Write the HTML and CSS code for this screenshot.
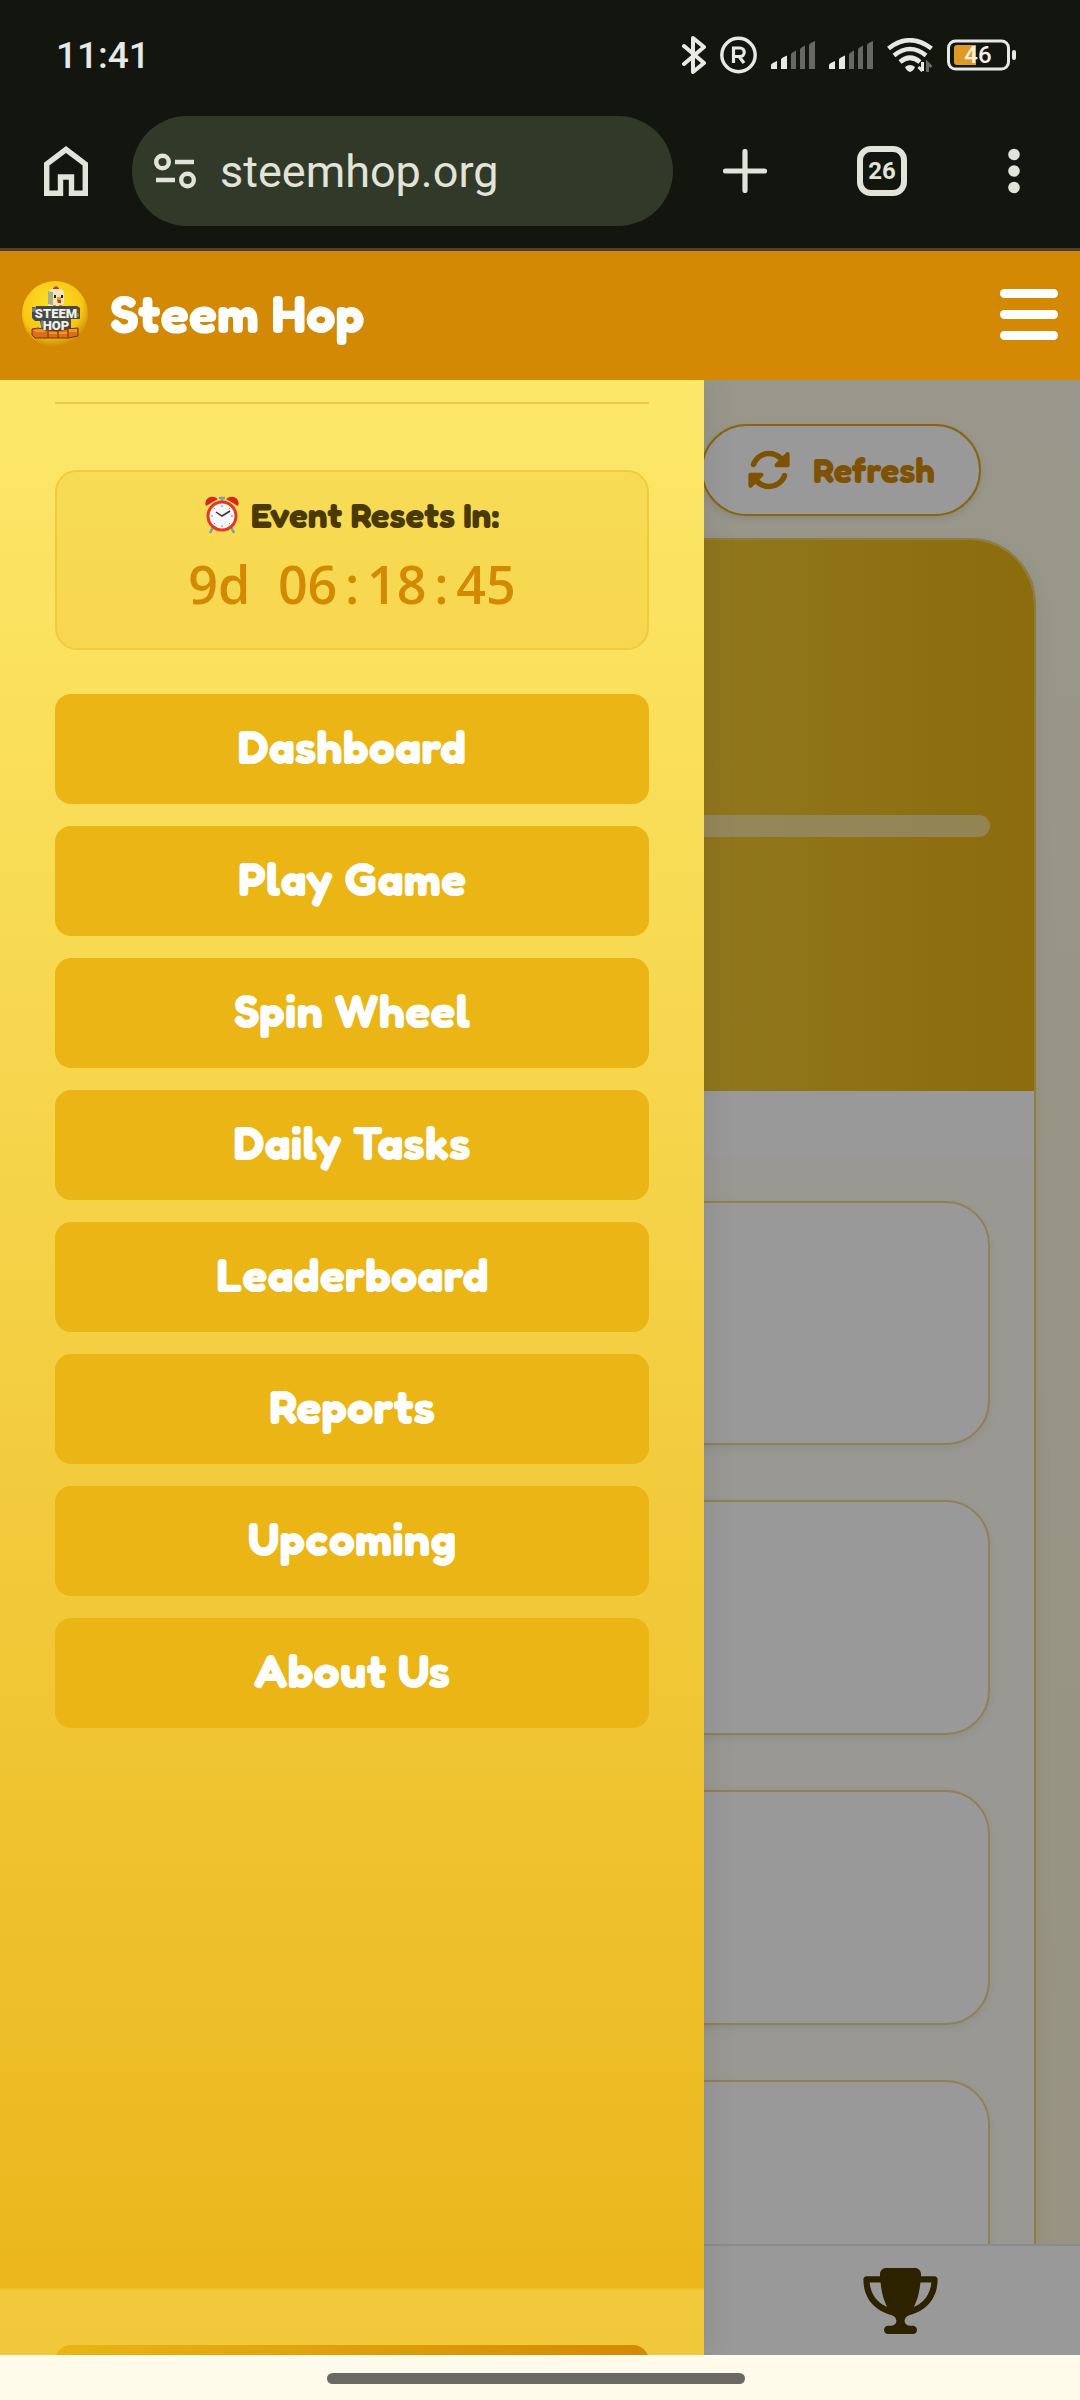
FILE: index.html
```html
<!DOCTYPE html>
<html lang="en">
<head>
<meta charset="UTF-8">
<meta name="viewport" content="width=device-width,initial-scale=1.0">
<title>Steem Hop</title>
<link rel="stylesheet" href="styles.css">
</head>

<body>
	<div class="browser">
		<div class="status">
			<span class="clock">11:41</span>
			<div class="status-icons">
				<svg width="24" height="38" viewBox="0 0 24 38" fill="none" stroke="#e8e8e6" stroke-width="4" stroke-linecap="round" stroke-linejoin="round"><path d="M2 10l20 17-11 9V2l11 9L2 28"/></svg>
				<svg width="37" height="38" viewBox="0 0 37 38" fill="none" stroke="#e8e8e6"><circle cx="18.500" cy="19" r="16.700" stroke-width="3.400"/><path d="M13.500 27V12h6.500a4 4 0 0 1 0 8.500h-6.500M19 20.500l5 6.500" stroke-width="3.200"/></svg>
				<svg width="44" height="30" viewBox="0 0 44 30" fill="#e8e8e6"><path d="M0 29v-4q0-1.500 6-4v8zM10 29V19.500q0-1.500 6-4V29z"/><path fill="#676864" d="M20 29V14.500q0-1.500 5-4V29zM29 29V9.500q0-1.500 5-4V29zM38 29V5q0-1.500 6-4v28z"/></svg>
				<svg width="44" height="30" viewBox="0 0 44 30" fill="#e8e8e6"><path d="M0 29v-4q0-1.500 6-4v8zM10 29V19.500q0-1.500 6-4V29z"/><path fill="#676864" d="M20 29V14.500q0-1.500 5-4V29zM29 29V9.500q0-1.500 5-4V29zM38 29V5q0-1.500 6-4v28z"/></svg>
				<svg width="46" height="34" viewBox="0 0 46 34" fill="none" stroke="#e8e8e6" stroke-width="4.600"><path d="M1.500 10.500q21-16.500 43 0M7 17.500q16-13 32 0M13 24q10-8.500 20 0"/><path fill="#e8e8e6" stroke="none" d="M18 29q5-4 10 0-1.500 4-5 5-3.500-1-5-5z"/><path d="M35.500 24v9M35.500 33l-4-4" stroke-width="3"/><path d="M40.500 34v-9l4 4" stroke="#676864" stroke-width="3"/></svg>
				<svg width="69" height="32" viewBox="0 0 69 32"><rect x="1.500" y="2" width="60" height="28" rx="7" fill="none" stroke="#e8e8e6" stroke-width="3"/><path d="M10 6h19v20H10a3 3 0 0 1-3-3V9a3 3 0 0 1 3-3z" fill="#df9a25"/><rect x="65" y="11" width="4" height="10" rx="2" fill="#e8e8e6"/><text x="31" y="24" class="battery">46</text></svg>
			</div>
		</div>
		<div class="toolbar">
			<button class="tool" aria-label="Home">
				<svg width="44" height="50" viewBox="0 0 44 50"><path d="M2.700 47.300V18L22 3.500 41.300 18v29.300H27.500V31h-11v16.300z" fill="none" stroke="#e2e4d9" stroke-width="5.400"/></svg>
			</button>
			<div class="address">
				<svg width="42" height="36" viewBox="0 0 42 36" fill="none" stroke="#e2e4d9" stroke-width="4.400"><circle cx="8.500" cy="9" r="6.300"/><path d="M21 9h19M2 27h19"/><circle cx="33.500" cy="27" r="6.300"/></svg>
				<input type="text" value="steemhop.org" aria-label="Address">
			</div>
			<button class="tool" aria-label="New tab">
				<svg width="44" height="44" viewBox="0 0 44 44"><path d="M22 2.500v39M2.500 22h39" stroke="#e2e4d9" stroke-width="5.200" stroke-linecap="round"/></svg>
			</button>
			<button class="tool tabs">26</button>
			<button class="tool" aria-label="More">
				<svg width="12" height="46" viewBox="0 0 12 46" fill="#e2e4d9"><circle cx="6" cy="6.500" r="5.800"/><circle cx="6" cy="23" r="5.800"/><circle cx="6" cy="39.500" r="5.800"/></svg>
			</button>
		</div>
	</div>

	<header class="site-header">
		<svg class="logo" viewBox="0 0 66 66">
			<defs>
				<radialGradient id="ball" cx="45%" cy="36%" r="66%">
					<stop offset="0" stop-color="#ffe227"/>
					<stop offset=".7" stop-color="#f7c615"/>
					<stop offset="1" stop-color="#c88308"/>
				</radialGradient>
			</defs>
			<circle cx="33" cy="33" r="33" fill="url(#ball)"/>
			<path fill="#d8341c" d="M31 9V7l3-2 3 2v3h-6z"/>
			<path fill="#f1e6bd" d="M26 10l4-2h9l3 3v12l-5 2H26z"/>
			<path fill="#a9b184" d="M26 10l5 1v13l-5-1z"/>
			<path fill="#28211a" d="M32 14h2v3h-2zM39 14h2v3h-2z"/>
			<path fill="#ed9b15" d="M35 16h4v3h-4z"/>
			<path fill="#cb3617" d="M35 19h4v3h-3z"/>
			<path fill="#d99009" d="M31 24h3v3h-3zM37 24h3v3h-3z"/>
			<path fill="#464a48" d="M10 26h4v-1h41l3 2v11h-9v12H20l-2-10h-5l-3-3z"/>
			<path fill="#7a7f79" d="M10 27l4-1v4l-4 1zM19 40l2-1v8l-2-2z"/>
			<path fill="#b92f16" d="M55 28h2v3h-2z"/>
			<path fill="#5c9129" d="M55 32h2v4h-2z"/>
			<path fill="#d8701b" stroke="#7b3009" d="M10 48l6-1 8 2 11 1 10-2 11-1v8l-10 2H13l-3-3z"/>
			<path fill="#f1991f" d="M11 49l9-1 4 3H14zM27 51h8v2h-8zM37 51h8v2h-8zM47 48h8v3h-8z"/>
			<path stroke="#7b3009" d="M26 50v7M36 50v7M46 48v8"/>
			<text x="34" y="37" class="logo-text">STEEM</text>
			<text x="34" y="49" class="logo-text">HOP</text>
		</svg>
		<h1>Steem Hop</h1>
		<button class="burger" aria-label="Menu"><span></span><span></span><span></span></button>
	</header>

	<main>
		<div class="page">
			<button class="refresh">
				<svg width="44" height="44" viewBox="0 0 512 512" fill="currentColor"><path d="M142.900 142.900c62.200-62.200 162.700-62.500 225.300-1L327 183c-6.900 6.900-8.900 17.200-5.200 26.200s12.500 14.800 22.200 14.800H472c13.300 0 24-10.700 24-24V72c0-9.700-5.800-18.500-14.800-22.200s-19.300-1.700-26.200 5.200L413.400 96.600c-87.600-86.500-228.700-86.200-315.800 1C73.200 122 55.600 150.700 44.800 181.400c-5.900 16.700 2.900 34.900 19.500 40.800s34.900-2.900 40.800-19.500c7.700-21.800 20.200-42.300 37.800-59.800zM16 312V440c0 9.700 5.800 18.500 14.800 22.200s19.300 1.700 26.200-5.200l41.600-41.600c87.600 86.500 228.700 86.200 315.800-1c24.400-24.400 42.100-53.100 52.900-83.700c5.900-16.700-2.900-34.900-19.500-40.800s-34.900 2.900-40.800 19.500c-7.700 21.800-20.200 42.300-37.800 59.800c-62.200 62.200-162.700 62.500-225.300 1L185 329c6.900-6.900 8.900-17.200 5.200-26.200s-12.500-14.800-22.200-14.800H40c-13.300 0-24 10.700-24 24z"/></svg>
				Refresh
			</button>
			<section class="board">
				<div class="hero"><div class="progress"></div></div>
				<div class="strip"></div>
				<div class="list">
					<div class="card first"></div>
					<div class="card"></div>
					<div class="card"></div>
					<div class="card"></div>
				</div>
			</section>
		</div>
		<nav class="tabbar">
			<a href="#leaderboard" aria-label="Leaderboard">
				<svg width="75" height="66" viewBox="0 0 576 512" fill="currentColor"><path d="M400 0H176c-26.500 0-48.100 21.800-47.100 48.200c.2 5.300 .4 10.600 .7 15.800H24C10.700 64 0 74.700 0 88c0 92.600 33.500 157 78.500 200.700c44.300 43.100 98.300 64.800 138.100 75.800c23.400 6.500 39.400 26 39.400 45.600c0 20.900-17 37.900-37.900 37.900H192c-17.700 0-32 14.300-32 32s14.300 32 32 32H384c17.700 0 32-14.300 32-32s-14.300-32-32-32H357.900C337 448 320 431 320 410.100c0-19.600 15.900-39.200 39.400-45.600c39.900-11 93.900-32.700 138.200-75.800C542.500 245 576 180.600 576 88c0-13.300-10.700-24-24-24H446.400c.3-5.200 .5-10.400 .7-15.800C448.100 21.800 426.500 0 400 0zM48.900 112h84.400c9.100 90.100 29.200 150.300 51.900 190.600c-24.900-11-50.800-26.500-73.200-48.300c-32-31.100-58-76-63-142.300zM464.100 254.300c-22.400 21.800-48.300 37.300-73.200 48.300c22.700-40.300 42.800-100.500 51.900-190.600h84.400c-5.100 66.300-31.100 111.200-63 142.300z"/></svg>
			</a>
		</nav>
		<div class="overlay"></div>
		<aside class="drawer">
			<div class="drawer-body">
				<hr>
				<div class="timer">
					<div class="timer-label">
						<svg width="34" height="38" viewBox="0 0 34 38">
							<path d="M8 31l-3 6M26 31l3 6M17 2v4M14 2h6" stroke="#7ba0a8" stroke-width="2.500"/>
							<path d="M1 10q-2-5 2-8 5-3 10 1zM33 10q2-5-2-8-5-3-10 1z" fill="#d6291f"/>
							<circle cx="17" cy="20" r="14" fill="#f7f7f7" stroke="#e2382a" stroke-width="3"/>
							<path d="M17 9v2M17 29v2M6 20h2M26 20h2M9 12l1 1M25 12l-1 1M9 28l1-1M25 28l-1-1" stroke="#888"/>
							<path d="M11 16l6 4 8-5" fill="none" stroke="#333" stroke-width="1.500"/>
						</svg>
						Event Resets In:
					</div>
					<div class="timer-value">9d <span class="hms">06<span class="colon">:</span>18<span class="colon">:</span>45</span></div>
				</div>
				<nav class="menu">
					<a href="#dashboard">Dashboard</a>
					<a href="#play">Play Game</a>
					<a href="#spin">Spin Wheel</a>
					<a href="#tasks">Daily Tasks</a>
					<a href="#leaderboard">Leaderboard</a>
					<a href="#reports">Reports</a>
					<a href="#upcoming">Upcoming</a>
					<a href="#about">About Us</a>
				</nav>
			</div>
			<div class="drawer-foot"><button aria-label="Account"></button></div>
		</aside>
	</main>

	<div class="gesture"><span></span></div>
</body>
</html>
```
FILE: styles.css
```css
* {
	box-sizing: border-box;
}
body {
	margin: 0;
	height: 100vh;
	display: flex;
	flex-direction: column;
	font-family: "Fredoka One", Fredoka, Lato, sans-serif;
	font-weight: 700;
	background: #fffbea;
}
button {
	padding: 0;
	border: 0;
	background: none;
	font: inherit;
	color: inherit;
}
svg {
	display: block;
	flex: none;
}
a {
	text-decoration: none;
	color: inherit;
}

/* phone status bar and browser toolbar */
.browser {
	flex: none;
	background: #12160e;
	border-bottom: 3px solid #4a4428;
	font-family: Roboto, sans-serif;
}
.status {
	height: 108px;
	padding: 2px 64px 0 56px;
	display: flex;
	align-items: center;
	justify-content: space-between;
}
.clock {
	font-size: 37px;
	font-weight: 500;
	color: #e8e8e6;
}
.status-icons {
	display: flex;
	align-items: center;
	gap: 14px;
}
.battery {
	font-size: 24px;
	font-weight: 500;
	text-anchor: middle;
	fill: #f5f0e0;
}
.toolbar {
	padding: 8px 60px 22px 44px;
	display: flex;
	align-items: center;
}
.tool {
	flex: none;
}
.address {
	flex: 1;
	min-width: 0;
	height: 110px;
	margin: 0 50px 0 44px;
	padding: 0 22px;
	display: flex;
	align-items: center;
	gap: 24px;
	border-radius: 55px;
	background: #313929;
}
.address input {
	flex: 1;
	min-width: 0;
	padding: 0;
	border: 0;
	background: none;
	font: 45px Roboto, sans-serif;
	color: #e2e4d9;
}
.tabs {
	width: 50px;
	height: 50px;
	margin: 0 101px 0 90px;
	border: 6px solid #e2e4d9;
	border-radius: 14px;
	font-size: 24px;
	color: #e2e4d9;
}

.site-header {
	flex: none;
	padding: 30px 22px 33px;
	display: flex;
	align-items: center;
	gap: 22px;
	background: #d38904;
	color: #fff;
}
.logo {
	width: 66px;
	height: 66px;
}
.logo-text {
	font: 900 13px Roboto, sans-serif;
	text-anchor: middle;
	fill: #f2f0e8;
}
h1 {
	flex: 1;
	margin: 0;
	font-size: 53px;
	line-height: 60px;
}
.burger {
	width: 58px;
	display: grid;
	gap: 12px;
}
.burger span {
	height: 9px;
	border-radius: 5px;
	background: #fff;
}

main {
	flex: 1;
	min-height: 0;
	position: relative;
	overflow: hidden;
	display: flex;
	flex-direction: column;
	background: linear-gradient(#fffbe8, #fdf6d8);
}
.page {
	flex: 1;
	min-height: 0;
	overflow: hidden;
	padding: 44px 44px 0;
}
.refresh {
	height: 92px;
	margin: 0 55px 22px auto;
	padding: 0 44px;
	display: flex;
	align-items: center;
	gap: 22px;
	border: 2px solid #dfab20;
	border-radius: 46px;
	background: #fff;
	box-shadow: 0 3px 8px rgba(0,0,0,.1);
	font-size: 35px;
	color: #d38904;
}
.board {
	border: 2px solid #edcf6c;
	border-radius: 66px 66px 0 0;
	overflow: hidden;
	background: #fff;
	box-shadow: 0 6px 20px rgba(0,0,0,.07);
}
.hero {
	height: 551px;
	padding: 275px 44px 0;
	background: linear-gradient(90deg, #fde76a, #eab515);
}
.progress {
	height: 22px;
	border-radius: 11px;
	background: rgba(255,255,255,.5);
}
.strip {
	height: 66px;
}
.list {
	padding: 44px;
	display: grid;
	gap: 55px;
	background: #fffdf3;
}
.card {
	height: 235px;
	border: 2px solid #f0d58f;
	border-radius: 44px;
	background: #fff;
	box-shadow: 0 3px 8px rgba(0,0,0,.07);
}
.card.first {
	height: 244px;
}
.tabbar {
	flex: none;
	height: 111px;
	display: grid;
	grid-template-columns: repeat(3, 1fr);
	border-top: 2px solid #e8e8e8;
	background: #fff;
	color: #4b3a00;
}
.tabbar a {
	grid-column: 3;
	display: grid;
	place-items: center;
}
.overlay {
	position: absolute;
	inset: 0;
	background: rgba(0,0,0,.4);
}

.drawer {
	position: absolute;
	inset: 0 auto 0 0;
	width: 704px;
	max-width: 80%;
	display: flex;
	flex-direction: column;
	background: linear-gradient(#fde869, #eab51a);
	box-shadow: 4px 0 30px rgba(0,0,0,.08);
}
.drawer-body {
	flex: 1;
	min-height: 0;
	padding: 22px 55px 0;
}
hr {
	margin: 0 0 66px;
	border: 0;
	border-top: 2px solid #edc843;
}
.timer {
	height: 180px;
	margin-bottom: 44px;
	padding-top: 19px;
	border: 2px solid #efcb40;
	border-radius: 22px;
	background: rgba(234,181,21,.2);
	text-align: center;
}
.timer-label {
	display: flex;
	justify-content: center;
	align-items: center;
	gap: 12px;
	font-size: 35px;
	line-height: 48px;
	color: #4b3a00;
}
.timer-value {
	font: 600 52px/90px "Open Sans", sans-serif;
	color: #d38904;
}
.hms {
	margin-left: 14px;
}
.colon {
	display: inline-block;
	width: 1ch;
}
.menu {
	display: grid;
	gap: 22px;
}
.menu a {
	padding-bottom: 4px;
	border-radius: 16px;
	background: #eab515;
	font-size: 47px;
	line-height: 106px;
	text-align: center;
	color: #fff;
}
.drawer-foot {
	flex: none;
	height: 67px;
	padding: 55px 55px 0;
	overflow: hidden;
	border-top: 2px solid #efc02a;
	background: rgba(253,231,106,.4);
}
.drawer-foot button {
	width: 100%;
	height: 110px;
	border-radius: 16px;
	background: linear-gradient(90deg, #eab515, #d38904);
}

.gesture {
	flex: none;
	height: 45px;
	padding: 2px 8px 0 0;
	display: grid;
	place-items: center;
	background: #fffbea;
}
.gesture span {
	width: 418px;
	height: 11px;
	border-radius: 6px;
	background: #6b6a62;
}
```
